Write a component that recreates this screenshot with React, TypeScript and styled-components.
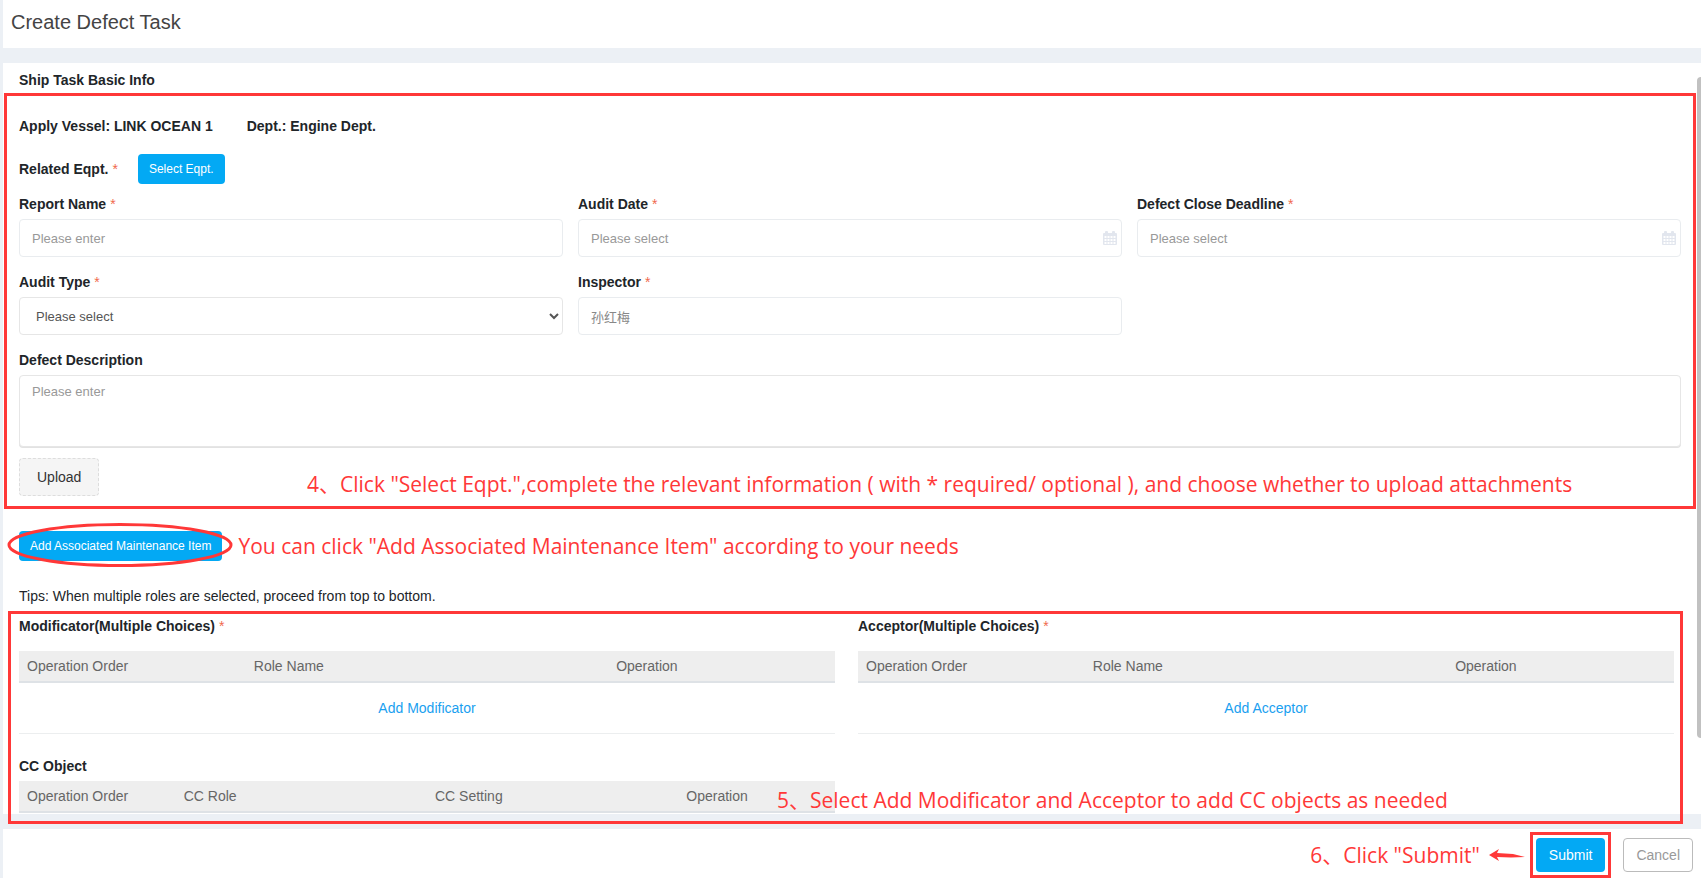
import React, { useId } from "react";
import styled, { createGlobalStyle } from "styled-components";

const RED = "#ff3838";
const BLUE = "#03a9f4";
const SANS = `"Liberation Sans", Arial, "Noto Sans CJK SC", sans-serif`;

const GlobalStyle = createGlobalStyle`
  *, *::before, *::after { box-sizing: border-box; }
  body {
    margin: 0;
    background: #ecf0f5;
    color: #212529;
    font-family: ${SANS};
    font-size: 14px;
    line-height: 20px;
  }
  button, input, select, textarea { font-family: inherit; }
`;

const Page = styled.div`
  display: flex;
  flex-direction: column;
  gap: 15px;
  min-height: 100vh;
  padding-left: 3px;
`;

const Header = styled.header`
  background: #fff;
  padding: 10px 8px 14px;
`;

const Title = styled.h1`
  margin: 0;
  font-size: 20px;
  line-height: 24px;
  font-weight: 400;
  color: #444;
`;

const Content = styled.main`
  position: relative;
  flex: 1;
  background: #fff;
  padding: 7px 20px 1px 0;
`;

const ScrollThumb = styled.div`
  position: absolute;
  top: 14px;
  right: 0;
  width: 4px;
  height: 88%;
  border-radius: 4px 0 0 4px;
  background: #c1c1c1;
`;

const SectionTitle = styled.h2`
  margin: 0 0 0 16px;
  font-size: 14px;
  line-height: 20px;
`;

const Section = styled.section`
  position: relative;
  padding-left: 16px;
`;

const BasicInfo = styled(Section)`
  padding-top: 26px;
  padding-bottom: 35px;
`;

const RoleArea = styled(Section)`
  padding-top: 10px;
`;

const Highlight = styled.div<{ $inset: string }>`
  position: absolute;
  inset: ${(p) => p.$inset};
  border: 3px solid ${RED};
  pointer-events: none;
`;

const Note = styled.span`
  color: ${RED};
  font-family: "Open Sans", "Noto Sans CJK SC", sans-serif;
  font-size: 21px;
  line-height: 28px;
  white-space: nowrap;
`;

const FloatingNote = styled(Note)<{ $left: string; $bottom: string }>`
  position: absolute;
  left: ${(p) => p.$left};
  bottom: ${(p) => p.$bottom};
`;

const Facts = styled.div`
  display: flex;
  gap: 34px;
  font-weight: 700;
`;

const EquipmentRow = styled.div`
  display: flex;
  align-items: center;
  gap: 20px;
  margin: 18px 0 10px;
`;

const Label = styled.label`
  display: block;
  font-weight: 700;
  line-height: 20px;
`;

const Star = styled.span`
  margin-left: 4px;
  color: #f0694d;
  font-weight: 400;
`;

const PrimaryButton = styled.button<{ $large?: boolean }>`
  height: ${(p) => (p.$large ? 34 : 30)}px;
  padding: 0 ${(p) => (p.$large ? 13 : 11)}px;
  border: 0;
  border-radius: 4px;
  background: ${BLUE};
  color: #fff;
  font-size: ${(p) => (p.$large ? 14 : 12)}px;
`;

const CancelButton = styled.button`
  height: 34px;
  padding: 0 12px;
  border: 1px solid #bbb;
  border-radius: 4px;
  background: #fff;
  color: #999;
  font-size: 14px;
`;

const Fields = styled.div`
  display: grid;
  grid-template-columns: repeat(3, 1fr);
  gap: 15px;
`;

const Field = styled.div<{ $full?: boolean }>`
  position: relative;
  display: flex;
  flex-direction: column;
  gap: 5px;
  ${(p) => p.$full && "grid-column: 1 / -1;"}
`;

const Input = styled.input`
  width: 100%;
  height: 38px;
  padding: 0 12px;
  border: 1px solid #e9ecef;
  border-radius: 4px;
  background: #fff;
  color: #888;
  font-size: 13px;
  outline: none;
  &::placeholder { color: #999; opacity: 1; }
`;

const Select = styled.select`
  width: 100%;
  height: 38px;
  padding: 0 0 0 12px;
  border: 1px solid #e6e6e6;
  border-radius: 4px;
  background: #fff;
  color: #555;
  font-size: 13px;
`;

const TextArea = styled.textarea`
  display: block;
  width: 100%;
  height: 72px;
  padding: 6px 12px;
  border: 1px solid #e6e6e6;
  border-radius: 4px;
  font-size: 13px;
  line-height: 20px;
  resize: none;
  box-shadow: 0 1px 0 #e2e2e2;
  &::placeholder { color: #999; opacity: 1; }
`;

const CalendarMark = styled.svg`
  position: absolute;
  right: 5px;
  bottom: 12px;
  width: 14px;
  height: 14px;
  fill: #e2e6ee;
`;

const UploadButton = styled.button`
  height: 38px;
  margin-top: 11px;
  padding: 0 17px;
  border: 1px dashed #ddd;
  border-radius: 4px;
  background: #f5f5f5;
  color: #333;
  font-size: 14px;
`;

const MaintenanceRow = styled.div`
  position: relative;
  display: flex;
  align-items: center;
  gap: 16px;
  padding-left: 16px;
`;

const Ring = styled.svg`
  position: absolute;
  left: 4px;
  top: -9px;
  width: 226px;
  height: 46px;
  fill: none;
  stroke: ${RED};
  stroke-width: 3;
  pointer-events: none;
`;

const Tips = styled.p`
  margin: 25px 0 0 16px;
`;

const Roles = styled.div`
  display: grid;
  grid-template-columns: 1fr 1fr;
  column-gap: 23px;
  row-gap: 22px;
  padding-right: 7px;
`;

const Table = styled.table<{ $gap: number }>`
  width: 100%;
  margin-top: ${(p) => p.$gap}px;
  border-collapse: separate;
  border-spacing: 0;
  table-layout: fixed;
`;

const HeadCell = styled.th<{ $share: string }>`
  width: ${(p) => p.$share};
  height: 32px;
  padding: 0 8px;
  border-bottom: 2px solid #dee2e6;
  background: #eee;
  color: #666;
  font-weight: 400;
  text-align: left;
`;

const AddCell = styled.td`
  height: 51px;
  padding: 0;
  border-bottom: 1px solid #eceeef;
  text-align: center;
`;

const AddLink = styled.a`
  color: #1a9ff0;
  text-decoration: none;
`;

const Footer = styled.footer`
  display: flex;
  justify-content: flex-end;
  align-items: center;
  height: 49px;
  padding: 3px 8px 0 0;
  background: #fff;
`;

const Arrow = styled.svg`
  width: 36px;
  height: 12px;
  margin: 0 11px 0 9px;
  fill: ${RED};
`;

const SubmitWrap = styled.div`
  position: relative;
  margin-right: 18px;
`;

function Required() {
  return <Star aria-hidden="true">*</Star>;
}

function Calendar() {
  return (
    <CalendarMark viewBox="0 0 14 14" aria-hidden="true">
      <path
        fillRule="evenodd"
        d="M1 2h1V1a1 1 0 0 1 1-1h1a1 1 0 0 1 1 1v1h4V1a1 1 0 0 1 1-1h1a1 1 0 0 1 1 1v1h1a1 1 0 0 1 1 1v10a1 1 0 0 1-1 1H1a1 1 0 0 1-1-1V3a1 1 0 0 1 1-1zM1.5 5v2h2V5zM4.5 5v2h2V5zM7.5 5v2h2V5zM10.5 5v2h2V5zM1.5 8v2h2V8zM4.5 8v2h2V8zM7.5 8v2h2V8zM10.5 8v2h2V8zM1.5 11v2h2v-2zM4.5 11v2h2v-2zM7.5 11v2h2v-2zM10.5 11v2h2v-2z"
      />
    </CalendarMark>
  );
}

type TextFieldProps = { label: string; placeholder?: string; value?: string; date?: boolean };

function TextField({ label, placeholder, value, date }: TextFieldProps) {
  const id = useId();
  return (
    <Field>
      <Label htmlFor={id}>
        {label}
        <Required />
      </Label>
      <Input id={id} type="text" placeholder={placeholder} defaultValue={value} />
      {date && <Calendar />}
    </Field>
  );
}

type RoleTableProps = {
  title: string;
  required?: boolean;
  columns: [string, string][];
  action?: string;
};

function RoleTable({ title, required, columns, action }: RoleTableProps) {
  const id = useId();
  return (
    <div>
      <Label as="div" id={id}>
        {title}
        {required && <Required />}
      </Label>
      <Table aria-labelledby={id} $gap={action ? 15 : 5}>
        <thead>
          <tr>
            {columns.map(([name, share]) => (
              <HeadCell key={name} scope="col" $share={share}>
                {name}
              </HeadCell>
            ))}
          </tr>
        </thead>
        {action && (
          <tbody>
            <tr>
              <AddCell colSpan={columns.length}>
                <AddLink href="#">{action}</AddLink>
              </AddCell>
            </tr>
          </tbody>
        )}
      </Table>
    </div>
  );
}

const roleColumns: [string, string][] = [
  ["Operation Order", "27.8%"],
  ["Role Name", "44.4%"],
  ["Operation", "27.8%"],
];

const ccColumns: [string, string][] = [
  ["Operation Order", "19.2%"],
  ["CC Role", "30.8%"],
  ["CC Setting", "30.8%"],
  ["Operation", "19.2%"],
];

export default function App() {
  return (
    <Page>
      <GlobalStyle />
      <Header>
        <Title>Create Defect Task</Title>
      </Header>

      <Content>
        <SectionTitle>Ship Task Basic Info</SectionTitle>

        <BasicInfo>
          <Facts>
            <span>Apply Vessel: LINK OCEAN 1</span>
            <span>Dept.: Engine Dept.</span>
          </Facts>
          <EquipmentRow>
            <Label as="span">
              Related Eqpt.
              <Required />
            </Label>
            <PrimaryButton type="button">Select Eqpt.</PrimaryButton>
          </EquipmentRow>
          <Fields>
            <TextField label="Report Name" placeholder="Please enter" />
            <TextField label="Audit Date" placeholder="Please select" date />
            <TextField label="Defect Close Deadline" placeholder="Please select" date />
            <Field>
              <Label htmlFor="audit-type">
                Audit Type
                <Required />
              </Label>
              <Select id="audit-type">
                <option>Please select</option>
              </Select>
            </Field>
            <TextField label="Inspector" value="孙红梅" />
            <Field $full>
              <Label htmlFor="description">Defect Description</Label>
              <TextArea id="description" placeholder="Please enter" />
            </Field>
          </Fields>
          <UploadButton type="button">Upload</UploadButton>
          <Highlight $inset="3px -15px 22px 1px" />
          <FloatingNote $left="304px" $bottom="33px">
            4、Click "Select Eqpt.",complete the relevant information ( with * required/ optional ), and choose
            whether to upload attachments
          </FloatingNote>
        </BasicInfo>

        <MaintenanceRow>
          <PrimaryButton type="button">Add Associated Maintenance Item</PrimaryButton>
          <Ring viewBox="0 0 226 46" aria-hidden="true">
            <ellipse cx="113" cy="23" rx="111" ry="20.5" />
          </Ring>
          <Note>You can click "Add Associated Maintenance Item" according to your needs</Note>
        </MaintenanceRow>

        <Tips>Tips: When multiple roles are selected, proceed from top to bottom.</Tips>

        <RoleArea>
          <Roles>
            <RoleTable
              title="Modificator(Multiple Choices)"
              required
              columns={roleColumns}
              action="Add Modificator"
            />
            <RoleTable title="Acceptor(Multiple Choices)" required columns={roleColumns} action="Add Acceptor" />
            <RoleTable title="CC Object" columns={ccColumns} />
          </Roles>
          <Highlight $inset="5px -2px -11px 5px" />
          <FloatingNote $left="774px" $bottom="-1px">
            5、Select Add Modificator and Acceptor to add CC objects as needed
          </FloatingNote>
        </RoleArea>
        <ScrollThumb />
      </Content>

      <Footer>
        <Note>6、Click "Submit"</Note>
        <Arrow viewBox="0 0 36 12" aria-hidden="true">
          <path d="M0 6 10 0 8 4 24 5 36 8 22 8.500 8 8 10 12z" />
        </Arrow>
        <SubmitWrap>
          <PrimaryButton type="submit" $large>
            Submit
          </PrimaryButton>
          <Highlight $inset="-6px" />
        </SubmitWrap>
        <CancelButton type="button">Cancel</CancelButton>
      </Footer>
    </Page>
  );
}
